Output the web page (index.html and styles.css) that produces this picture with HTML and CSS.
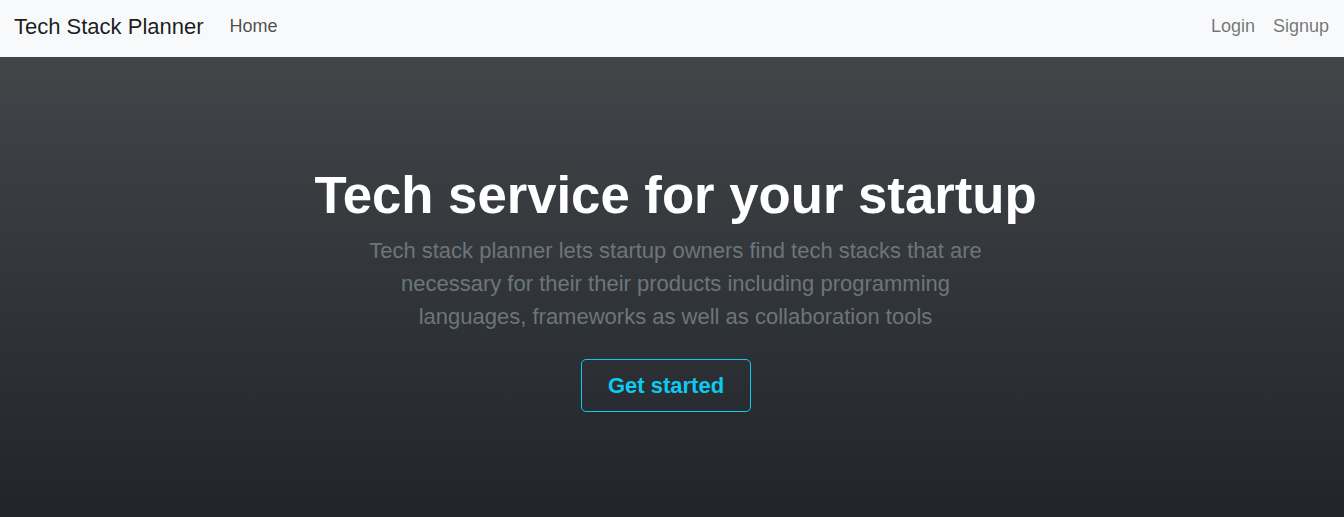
FILE: index.html
```html
<!DOCTYPE html>
<html lang="en">
<head>
<meta charset="utf-8">
<title>Tech Stack Planner</title>
<link rel="stylesheet" href="styles.css">
</head>
<body>
<nav class="navbar">
  <div class="nav-left">
    <a class="brand" href="#">Tech Stack Planner</a>
    <a class="nav-link active" href="#">Home</a>
  </div>
  <div class="nav-right">
    <a class="nav-link" href="#">Login</a>
    <a class="nav-link" href="#">Signup</a>
  </div>
</nav>
<section class="hero">
  <h1 class="hero-title">Tech service for your startup</h1>
  <div class="hero-body">
    <p class="lead">Tech stack planner lets startup owners find tech stacks that are necessary for their their products including programming languages, frameworks as well as collaboration tools</p>
    <a class="btn" href="#">Get started</a>
  </div>
</section>
</body>
</html>
```
FILE: styles.css
```css
* { box-sizing: border-box; }
html, body { margin: 0; padding: 0; }
body {
  font-family: "Liberation Sans", Arial, sans-serif;
  background: #212529;
  min-height: 100vh;
}
a { text-decoration: none; }
.navbar {
  display: flex;
  justify-content: space-between;
  align-items: center;
  background: #f8f9fa;
  height: 57px;
  padding: 0 15px 4px 14px;
}
.nav-left, .nav-right {
  display: flex;
  align-items: center;
}
.brand {
  font-size: 22px;
  color: rgba(0,0,0,0.9);
  margin-right: 26px;
}
.nav-link {
  font-size: 18px;
  color: rgba(0,0,0,0.55);
}
.nav-link.active { color: rgba(0,0,0,0.7); }
.nav-right .nav-link { margin-left: 18px; }
.hero {
  background: linear-gradient(180deg, rgba(255,255,255,0.15), rgba(255,255,255,0)) #212529;
  height: 460px;
  display: flex;
  flex-direction: column;
  align-items: center;
  padding: 106px 0 0 7px;
  text-align: center;
}
.hero-title {
  margin: 0 0 8px;
  font-size: 52.7px;
  font-weight: 700;
  color: #fff;
  line-height: 1.2;
}
.hero-body {
  width: 648px;
  display: flex;
  flex-direction: column;
  align-items: center;
}
.lead {
  margin: 0 0 26px;
  font-size: 22px;
  line-height: 33px;
  color: #6c757d;
}
.btn {
  display: inline-block;
  border: 1px solid #0dcaf0;
  border-radius: 5px;
  color: #0dcaf0;
  font-weight: 700;
  font-size: 22px;
  line-height: 33px;
  padding: 9px 26px;
  margin-right: 19px;
}
```
